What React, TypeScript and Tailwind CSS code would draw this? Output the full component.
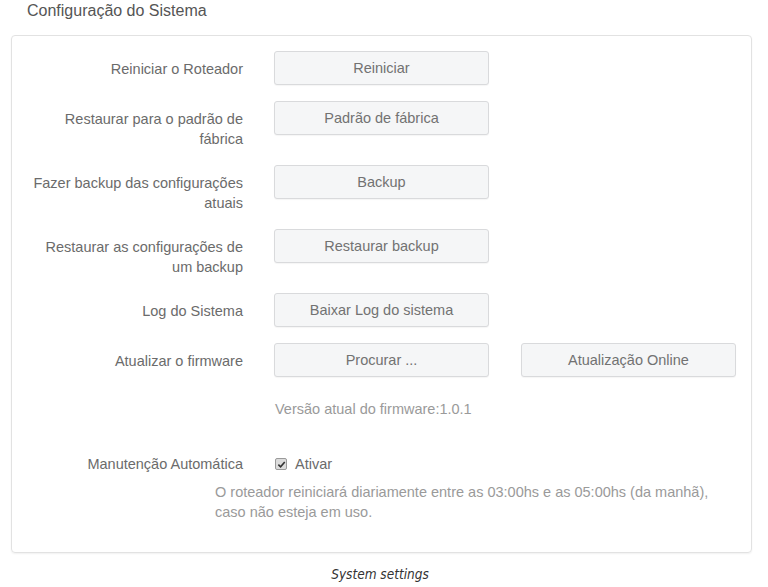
import React from "react";

const Btn = ({ children }: { children: React.ReactNode }) => (
  <button className="h-[34px] w-[215px] shrink-0 rounded-[3px] border border-[#d9dadc] bg-[#f5f6f7] pt-[2px] text-[14.5px] text-[#727272] shadow-[0_1px_1px_rgba(0,0,0,0.04)]">
    {children}
  </button>
);

const Row = ({
  label,
  children,
}: {
  label: React.ReactNode;
  children: React.ReactNode;
}) => (
  <div className="flex items-start">
    <div className="w-[216px] shrink-0 pt-[8px] text-right text-[14.5px] leading-[20px] text-[#6b6b6b]">
      {label}
    </div>
    <div className="ml-[31px] flex gap-[32px]">{children}</div>
  </div>
);

export default function App() {
  return (
    <div
      className="relative h-[587px] w-[768px] bg-white"
      style={{ fontFamily: '"Liberation Sans", Arial, sans-serif' }}
    >
      <div className="pl-[27px] pt-[1px] text-[16px] leading-[20px] text-[#555]">
        Configuração do Sistema
      </div>
      <div className="ml-[11px] mt-[14px] w-[741px] rounded-[4px] border border-[#e2e2e2] pb-[30px] pl-[15px] pt-[15px] shadow-[0_1px_2px_rgba(0,0,0,0.06)]">
        <div className="flex flex-col gap-[16px]">
          <Row label="Reiniciar o Roteador">
            <Btn>Reiniciar</Btn>
          </Row>
          <Row
            label={
              <>
                Restaurar para o padrão de
                <br />
                fábrica
              </>
            }
          >
            <Btn>Padrão de fábrica</Btn>
          </Row>
          <Row
            label={
              <>
                Fazer backup das configurações
                <br />
                atuais
              </>
            }
          >
            <Btn>Backup</Btn>
          </Row>
          <Row
            label={
              <>
                Restaurar as configurações de
                <br />
                um backup
              </>
            }
          >
            <Btn>Restaurar backup</Btn>
          </Row>
          <Row label="Log do Sistema">
            <Btn>Baixar Log do sistema</Btn>
          </Row>
          <Row label="Atualizar o firmware">
            <Btn>Procurar ...</Btn>
            <Btn>Atualização Online</Btn>
          </Row>
        </div>
        <div className="ml-[248px] mt-[22px] text-[14.5px] leading-[20px] text-[#9a9a9a]">
          Versão atual do firmware:1.0.1
        </div>
        <div className="mt-[35px] flex items-start">
          <div className="w-[216px] shrink-0 text-right text-[14.5px] leading-[20px] text-[#6b6b6b]">
            Manutenção Automática
          </div>
          <div className="ml-[32px] flex items-center">
            <span className="flex h-[12px] w-[12px] items-center justify-center rounded-[2px] border border-[#9a9a9a] bg-[#dcdcdc]">
              <svg width="9" height="9" viewBox="0 0 10 10">
                <path
                  d="M1.5 5.2 L4 7.6 L8.6 2.2"
                  fill="none"
                  stroke="#333"
                  strokeWidth="1.8"
                />
              </svg>
            </span>
            <span className="ml-[8px] text-[14.5px] leading-[20px] text-[#6b6b6b]">
              Ativar
            </span>
          </div>
        </div>
        <div className="ml-[188px] mt-[8px] text-[14.5px] leading-[20px] text-[#9a9a9a]">
          O roteador reiniciará diariamente entre as 03:00hs e as 05:00hs (da
          manhã),
          <br />
          caso não esteja em uso.
        </div>
      </div>
      <div
        className="mt-[12px] text-center text-[13.5px] italic leading-[18px] text-[#333]"
        style={{ fontFamily: '"DejaVu Sans Condensed", "Open Sans", sans-serif' }}
      >
        <span className="ml-[-8px]">System settings</span>
      </div>
    </div>
  );
}
